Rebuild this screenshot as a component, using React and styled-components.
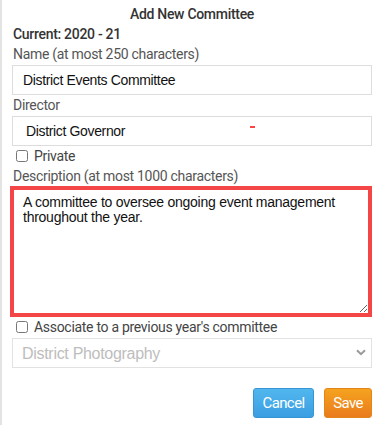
import React, { useEffect, useRef } from "react";
import styled, { createGlobalStyle } from "styled-components";

const GlobalStyle = createGlobalStyle`
    html, body {
        margin: 0;
        padding: 0;
        background: #fff;
    }
    body {
        font-family: Roboto, "Liberation Sans", sans-serif;
        letter-spacing: -0.3px;
    }
`;

const Panel = styled.div`
    width: 380px;
    height: 425px;
    box-sizing: border-box;
    border-left: 2px solid #e3e3e3;
    padding: 4px 8px 0 10px;
    display: flex;
    flex-direction: column;
`;

const Title = styled.div`
    font-size: 14px;
    font-weight: 500;
    line-height: 20px;
    color: #333;
    text-align: center;
`;

const Current = styled.div`
    font-size: 14px;
    font-weight: 500;
    line-height: 20px;
    color: #333;
    padding-left: 1px;
`;

const Label = styled.div`
    font-size: 14px;
    line-height: 20px;
    color: #555;
    padding-left: 1px;
`;

const Field = styled.div`
    position: relative;
    margin-top: 1px;
    height: 30px;
    box-sizing: border-box;
    border: 1px solid #ddd;
    display: flex;
    align-items: center;
    padding-left: ${(p) => p.$indent}px;
    font-family: "Liberation Sans", Arial, sans-serif;
    font-size: 14px;
    letter-spacing: -0.35px;
    color: #111;
`;

const Required = styled.span`
    position: absolute;
    left: 237px;
    top: 9px;
    width: 5px;
    height: 2px;
    background: #f44;
`;

const CheckRow = styled.label`
    display: flex;
    align-items: center;
    height: 20px;
    margin-top: ${(p) => p.$top || 0}px;
    font-size: 14px;
    color: #444;
`;

const Box = styled.input`
    width: 12px;
    height: 12px;
    margin: 0 6px 0 4px;
`;

const Area = styled.textarea`
    display: block;
    margin: 0 0 0 -2px;
    width: 362px;
    height: 131px;
    box-sizing: border-box;
    border: 4px solid #f44646;
    outline: none;
    padding: 5px 9px;
    font-family: "Liberation Sans", Arial, sans-serif;
    font-size: 14px;
    letter-spacing: -0.25px;
    line-height: 14.5px;
    color: #111;
    resize: vertical;
`;

const SelectWrap = styled.div`
    position: relative;
    margin-top: 1px;
`;

const Select = styled.select`
    display: block;
    width: 360px;
    height: 30px;
    box-sizing: border-box;
    border: 1px solid #e2e2e2;
    background: #fff;
    appearance: none;
    padding: 0 0 0 9px;
    font-family: "Liberation Sans", Arial, sans-serif;
    font-size: 16px;
    letter-spacing: -0.3px;
    color: #bdbdbd;
`;

const Chevron = styled.svg`
    position: absolute;
    right: 6px;
    top: 11px;
    pointer-events: none;
`;

const Actions = styled.div`
    display: flex;
    justify-content: flex-end;
    gap: 10px;
    margin-top: 20px;
`;

const Button = styled.button`
    width: ${(p) => p.$w}px;
    height: 30px;
    padding: 0;
    border-radius: 3px;
    font-family: "Liberation Sans Narrow", Roboto, sans-serif;
    font-size: 15px;
    letter-spacing: -0.6px;
    color: #fff;
    cursor: pointer;
    border: 1px solid ${(p) => (p.$kind === "save" ? "#e2861c" : "#3795d4")};
    background: ${(p) =>
        p.$kind === "save"
            ? "linear-gradient(#f5a31f, #ea7b1d)"
            : "linear-gradient(#51b7ee, #3a9ee2)"};
`;

const text = "A committee to oversee ongoing event management throughout the year.";

const App = () => {
    const areaRef = useRef(null);

    useEffect(() => {
        const el = areaRef.current;
        if (el) {
            el.focus();
            el.setSelectionRange(text.length, text.length);
        }
    }, []);

    return (
        <>
            <GlobalStyle />
            <Panel>
                <Title>Add New Committee</Title>
                <Current>Current: 2020 - 21</Current>
                <Label>Name (at most 250 characters)</Label>
                <Field $indent={10}>District Events Committee</Field>
                <Label>Director</Label>
                <Field $indent={13}>
                    District Governor
                    <Required />
                </Field>
                <CheckRow>
                    <Box type="checkbox" />
                    Private
                </CheckRow>
                <Label>Description (at most 1000 characters)</Label>
                <Area ref={areaRef} defaultValue={text} />
                <CheckRow>
                    <Box type="checkbox" />
                    Associate to a previous year's committee
                </CheckRow>
                <SelectWrap>
                    <Select defaultValue="photo">
                        <option value="photo">District Photography</option>
                    </Select>
                    <Chevron width="10" height="7" viewBox="0 0 10 7">
                        <path d="M1 1.2 L5 5.2 L9 1.2" fill="none" stroke="#9a9a9a" strokeWidth="2" />
                    </Chevron>
                </SelectWrap>
                <Actions>
                    <Button $w={61}>Cancel</Button>
                    <Button $kind="save" $w={48}>Save</Button>
                </Actions>
            </Panel>
        </>
    );
};

export default App;
